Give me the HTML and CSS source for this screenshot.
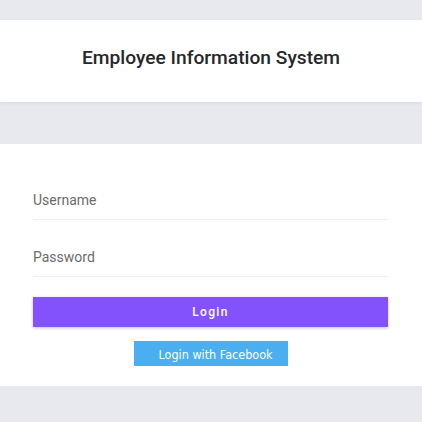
FILE: index.html
```html
<!DOCTYPE html>
<html lang="en">
<head>
<meta charset="utf-8">
<title>Employee Information System</title>
<link rel="stylesheet" href="styles.css">
</head>
<body>
  <header class="header">
    <h1 class="title">Employee Information System</h1>
  </header>
  <main class="card">
    <form class="form">
      <div class="field"><span class="label">Username</span></div>
      <div class="field field-2"><span class="label">Password</span></div>
      <button type="button" class="btn-login">Login</button>
      <div class="fb-row">
        <button type="button" class="btn-fb">Login with Facebook</button>
      </div>
    </form>
  </main>
</body>
</html>
```
FILE: styles.css
```css
html, body {
  margin: 0;
  padding: 0;
}
body {
  background: #e8e9ee;
  padding-top: 20px;
  font-family: Roboto, "Liberation Sans", sans-serif;
  height: 422px;
  box-sizing: border-box;
  overflow: hidden;
}
.header {
  background: #fff;
  height: 82px;
  display: flex;
  align-items: center;
  justify-content: center;
  box-shadow: 0 1px 3px rgba(0,0,0,0.08);
}
.title {
  margin: 0;
  font-size: 19.2px;
  font-weight: 500;
  color: #25272b;
  padding-bottom: 7px;
}
.card {
  background: #fff;
  margin-top: 42px;
  height: 242px;
  box-sizing: border-box;
  padding: 46px 34px 20px 33px;
}
.form {
  display: flex;
  flex-direction: column;
}
.field {
  border-bottom: 1px solid #eeeeee;
  padding-bottom: 9px;
  line-height: 20px;
}
.field-2 {
  margin-top: 27px;
}
.label {
  font-size: 14px;
  color: #6b6b6b;
}
.btn-login {
  margin-top: 20px;
  height: 30px;
  border: 0;
  background: #8352fd;
  color: #fff;
  font-family: Roboto, "Liberation Sans", sans-serif;
  font-size: 12px;
  font-weight: 500;
  letter-spacing: 1.3px;
  box-shadow: 0 1px 3px rgba(0,0,0,0.25);
  padding: 0;
}
.fb-row {
  display: flex;
  justify-content: center;
  margin-top: 14px;
}
.btn-fb {
  height: 25px;
  width: 154px;
  border: 0;
  background: #4aaff0;
  color: #fff;
  font-family: "DejaVu Sans Condensed", "DejaVu Sans", sans-serif;
  font-size: 12.5px;
  padding: 2px 10px 0 25px;
  text-align: left;
  white-space: nowrap;
}
```
